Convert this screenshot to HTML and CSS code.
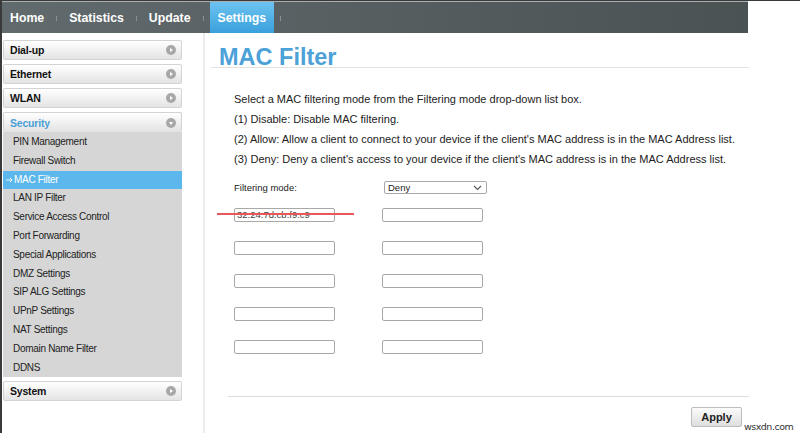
FILE: index.html
```html
<!DOCTYPE html>
<html>
<head>
<meta charset="utf-8">
<link rel="stylesheet" href="styles.css">
</head>
<body>
<div class="page">
  <div class="topbar">
    <a class="tab">Home</a><span class="sep"></span>
    <a class="tab">Statistics</a><span class="sep"></span>
    <a class="tab">Update</a><span class="sep"></span>
    <a class="tab active">Settings</a><span class="sep"></span>
  </div>
  <div class="body">
    <div class="sidebar">
      <div class="head"><span>Dial-up</span><i class="ico"></i></div>
      <div class="head"><span>Ethernet</span><i class="ico"></i></div>
      <div class="head"><span>WLAN</span><i class="ico"></i></div>
      <div class="head open"><span>Security</span><i class="ico down"></i></div>
      <ul class="sub">
        <li>PIN Management</li>
        <li>Firewall Switch</li>
        <li class="cur"><svg class="arrow" width="7" height="6" viewBox="0 0 7 6"><path d="M0 3 H6 M3.8 0.8 L6 3 L3.8 5.2" fill="none" stroke="#fff" stroke-width="0.9"/></svg>MAC Filter</li>
        <li>LAN IP Filter</li>
        <li>Service Access Control</li>
        <li>Port Forwarding</li>
        <li>Special Applications</li>
        <li>DMZ Settings</li>
        <li>SIP ALG Settings</li>
        <li>UPnP Settings</li>
        <li>NAT Settings</li>
        <li>Domain Name Filter</li>
        <li>DDNS</li>
      </ul>
      <div class="head"><span>System</span><i class="ico"></i></div>
    </div>
    <div class="divider"></div>
    <div class="main">
      <h1 class="title">MAC Filter</h1>
      <div class="desc">
        <p>Select a MAC filtering mode from the Filtering mode drop-down list box.</p>
        <p>(1) Disable: Disable MAC filtering.</p>
        <p>(2) Allow: Allow a client to connect to your device if the client's MAC address is in the MAC Address list.</p>
        <p>(3) Deny: Deny a client's access to your device if the client's MAC address is in the MAC Address list.</p>
      </div>
      <div class="form">
        <div class="mode-row">
          <span class="label">Filtering mode:</span>
          <div class="select"><span>Deny</span><svg width="9" height="6" viewBox="0 0 9 6"><path d="M1 1 L4.5 4.5 L8 1" fill="none" stroke="#555" stroke-width="1.1"/></svg></div>
        </div>
        <div class="grid">
          <div class="inp">32:24:7d:cb:f9:c9</div><div class="inp"></div>
          <div class="inp"></div><div class="inp"></div>
          <div class="inp"></div><div class="inp"></div>
          <div class="inp"></div><div class="inp"></div>
          <div class="inp"></div><div class="inp"></div>
        </div>
        <div class="strike"></div>
      </div>
      <div class="footer">
        <button class="apply">Apply</button>
        <span class="mark">wsxdn.com</span>
      </div>
    </div>
  </div>
</div>
</body>
</html>
```
FILE: styles.css
```css
html, body {
  margin: 0;
  padding: 0;
}
body {
  width: 800px;
  height: 433px;
  overflow: hidden;
  background: #fff;
  font-family: "Liberation Sans", Arial, sans-serif;
  border-top: 1px solid #3a3a3a;
  box-sizing: border-box;
}
.page {
  height: 432px;
  border-left: 2px solid #3a3a3a;
  box-sizing: border-box;
  display: flex;
  flex-direction: column;
}
.topbar {
  width: 746px;
  height: 32px;
  box-sizing: border-box;
  border-top: 1px solid #a9aeaf;
  background: linear-gradient(to right, #616a6d, #4b5254);
  display: flex;
  align-items: stretch;
  padding-left: 8px;
}
.tab {
  color: #fff;
  font-weight: bold;
  font-size: 12.3px;
  display: flex;
  align-items: center;
}
.tab.active {
  background: linear-gradient(to bottom, #6cc3f0, #3aa0dc);
  padding: 0 8px;
  margin-left: -6px;
  margin-right: -6px;
}
.sep {
  width: 1px;
  height: 5px;
  background: #8a9194;
  align-self: center;
  margin: 2px 12px 0 12px;
}
.body {
  flex: 1;
  display: flex;
}
.sidebar {
  width: 179px;
  margin-left: 1px;
  padding-top: 7px;
  display: flex;
  flex-direction: column;
}
.head {
  height: 20px;
  box-sizing: border-box;
  border: 1px solid #d3d3d3;
  border-radius: 2px;
  background: linear-gradient(to bottom, #ffffff, #e4e4e4);
  display: flex;
  align-items: center;
  justify-content: space-between;
  padding: 0 5px 0 6px;
  font-size: 10.5px;
  letter-spacing: -0.2px;
  font-weight: bold;
  color: #111;
  margin-bottom: 4px;
}
.head.open {
  color: #4a9fd6;
  margin-bottom: 0;
  border-bottom: none;
  background: linear-gradient(to bottom, #ffffff, #e2e2e2);
}
.ico {
  width: 10px;
  height: 10px;
  border-radius: 50%;
  background: #a8a8a8;
  position: relative;
}
.ico::after {
  content: "";
  position: absolute;
  left: 4px;
  top: 2.5px;
  border-left: 3.5px solid #fff;
  border-top: 2.5px solid transparent;
  border-bottom: 2.5px solid transparent;
}
.ico.down::after {
  left: 2.5px;
  top: 4px;
  border-top: 3px solid #fff;
  border-left: 2.5px solid transparent;
  border-right: 2.5px solid transparent;
  border-bottom: none;
}
.sub {
  list-style: none;
  margin: 0 0 4px 0;
  padding: 1px 0 0 0;
  background: #d6d6d6;
}
.sub li {
  height: 18.8px;
  line-height: 18.8px;
  font-size: 10px;
  letter-spacing: -0.3px;
  color: #222;
  padding-left: 10px;
  display: flex;
  align-items: center;
}
.sub li.cur {
  background: #5cb7ec;
  color: #fff;
  padding-left: 3px;
}
.arrow {
  margin-right: 1px;
}
.divider {
  width: 2px;
  margin-left: 21px;
  background: #ececec;
}
.main {
  width: 544px;
  box-sizing: border-box;
  position: relative;
  display: flex;
  flex-direction: column;
  padding-left: 6px;
}
.title {
  margin: 0;
  height: 35px;
  box-sizing: border-box;
  border-bottom: 1px solid #e2e2e2;
  color: #4ba1d8;
  font-size: 23.5px;
  font-weight: bold;
  padding: 12px 0 0 8px;
  line-height: 24px;
}
.desc {
  padding: 21px 0 0 23px;
}
.desc p {
  margin: 0;
  font-size: 11px;
  line-height: 20px;
  color: #222;
  white-space: nowrap;
}
.form {
  position: relative;
  padding-left: 23px;
  margin-top: 12px;
}
.mode-row {
  display: flex;
  align-items: center;
  height: 13px;
}
.label {
  width: 150px;
  font-size: 9.5px;
  color: #222;
}
.select {
  width: 103px;
  height: 13px;
  box-sizing: border-box;
  border: 1px solid #a9a9a9;
  border-radius: 2px;
  display: flex;
  align-items: center;
  justify-content: space-between;
  padding: 0 4px 0 3px;
  font-size: 9.5px;
  color: #222;
}
.grid {
  margin-top: 14px;
  display: grid;
  grid-template-columns: 101px 101px;
  column-gap: 47px;
  row-gap: 19px;
}
.inp {
  height: 14px;
  box-sizing: border-box;
  border: 1px solid #a8a8a8;
  border-radius: 2px;
  font-size: 9.5px;
  line-height: 12px;
  padding-left: 2px;
  color: #444;
}
.strike {
  position: absolute;
  left: 6px;
  top: 32px;
  width: 137px;
  height: 1.5px;
  background: #e8585a;
}
.footer {
  margin-top: 42px;
  margin-left: 17px;
  border-top: 1px solid #dcdcdc;
  display: flex;
  justify-content: flex-end;
  align-items: flex-end;
  padding-top: 10px;
  position: relative;
}
.apply {
  width: 51px;
  height: 20px;
  margin-right: 7px;
  font-family: "Liberation Sans", Arial, sans-serif;
  font-size: 11px;
  font-weight: bold;
  color: #222;
  border: 1px solid #bdbdbd;
  border-radius: 2px;
  background: linear-gradient(to bottom, #fbfbfb, #dedede);
  padding: 0;
}
.mark {
  position: absolute;
  left: 516px;
  top: 24px;
  font-size: 9.5px;
  line-height: 11px;
  color: #333;
  white-space: nowrap;
  font-family: "DejaVu Sans", sans-serif;
  letter-spacing: -0.5px;
}
```
